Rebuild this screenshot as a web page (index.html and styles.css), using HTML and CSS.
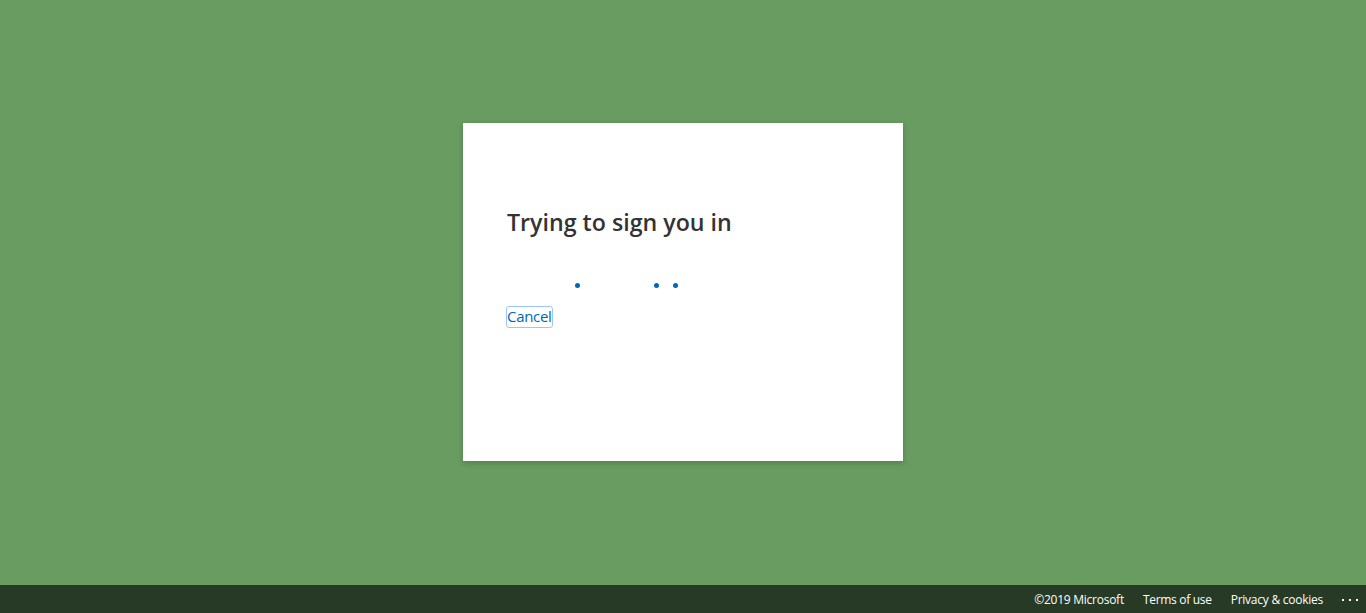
FILE: index.html
```html
<!DOCTYPE html>
<html lang="en">
<head>
<meta charset="utf-8">
<title>Sign in</title>
<link rel="stylesheet" href="styles.css">
</head>
<body>
<div class="page">
  <main class="stage">
    <section class="card">
      <h1 class="title">Trying to sign you in</h1>
      <div class="progress">
        <span class="dot d1"></span>
        <span class="dot d2"></span>
        <span class="dot d3"></span>
      </div>
      <a class="cancel" href="#">Cancel</a>
    </section>
  </main>
  <footer class="footer">
    <span class="flink">©2019 Microsoft</span>
    <a class="flink" href="#">Terms of use</a>
    <a class="flink" href="#">Privacy &amp; cookies</a>
    <span class="more"><i></i><i></i><i></i></span>
  </footer>
</div>
</body>
</html>
```
FILE: styles.css
```css
* { box-sizing: border-box; }
html, body { margin: 0; padding: 0; height: 100%; }
body {
  font-family: "Open Sans", "Noto Sans", "Liberation Sans", sans-serif;
  background: #689c60;
  overflow: hidden;
}
.page {
  height: 613px;
  display: flex;
  flex-direction: column;
}
.stage {
  flex: 1;
  display: flex;
  justify-content: center;
  align-items: flex-start;
  padding-top: 123px;
}
.card {
  width: 440px;
  height: 338px;
  background: #fff;
  box-shadow: 0 2px 6px rgba(0,0,0,0.2);
  padding: 85px 44px 0 44px;
  display: flex;
  flex-direction: column;
  align-items: flex-start;
}
.title {
  margin: 0;
  font-size: 23.2px;
  font-weight: 600;
  line-height: 28px;
  color: #333;
  letter-spacing: 0;
}
.progress {
  position: relative;
  width: 352px;
  height: 6px;
  margin-top: 47px;
}
.dot {
  position: absolute;
  top: 0;
  width: 5px;
  height: 5px;
  border-radius: 50%;
  background: #0067b8;
}
.d1 { left: 68px; }
.d2 { left: 147px; }
.d3 { left: 166px; }
.cancel {
  margin-top: 17px;
  margin-left: -1px;
  font-size: 15px;
  line-height: 19px;
  color: #0067b8;
  text-decoration: none;
  border: 1.5px solid #9ec3ff;
  border-radius: 3px;
  padding: 0 0 1px 0;
  letter-spacing: -0.3px;
}
.footer {
  height: 28px;
  background: #263a25;
  display: flex;
  justify-content: flex-end;
  align-items: center;
  padding-right: 8px;
}
.flink {
  color: #fff;
  font-size: 12px;
  text-decoration: none;
  margin-right: 19px;
  letter-spacing: -0.25px;
}
.flink:nth-child(2) { letter-spacing: -0.3px; }
.more {
  display: flex;
  gap: 5px;
  padding-top: 2px;
}
.more i {
  display: block;
  width: 2px;
  height: 2px;
  background: #fff;
}
```
